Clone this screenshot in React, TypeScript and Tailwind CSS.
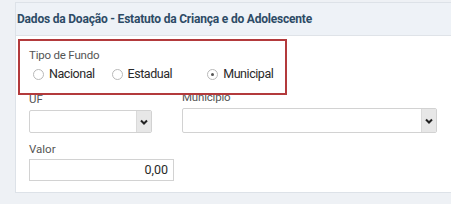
import React from "react";

function Radio({ label, checked, className = "" }: { label: string; checked?: boolean; className?: string }) {
  return (
    <label className={`flex items-center h-[16px] ${className}`}>
      <span className="w-[11px] h-[11px] rounded-full border border-[#b9b9b9] bg-white flex items-center justify-center">
        {checked && <span className="w-[3px] h-[3px] rounded-full bg-[#555]" />}
      </span>
      <span className="ml-[5px] text-[12.5px] tracking-[-0.45px] text-[#2a2a2a]">{label}</span>
    </label>
  );
}

function Select({ width, height }: { width: string; height: string }) {
  return (
    <div className={`${width} ${height} flex border border-[#d2d2d2] rounded-[2px] bg-white overflow-hidden`}>
      <div className="flex-1" />
      <div className="w-[15px] bg-[#e7e7e7] border-l border-[#dadada] flex items-center justify-center">
        <svg width="8" height="6" viewBox="0 0 8 6">
          <path d="M1 1.5 L4 4.5 L7 1.5" fill="none" stroke="#222" strokeWidth="2" />
        </svg>
      </div>
    </div>
  );
}

export default function App() {
  return (
    <div className="w-[451px] h-[204px] bg-[#eef1f5] pt-[2px] pl-[15px] overflow-hidden font-['Roboto',sans-serif]">
      <div className="border-l border-t border-b border-[#dde2e8]">
        <div className="h-[33px] flex items-center pl-[1px] bg-[#eef2f7] border-b border-[#dfe3e8] text-[12px] font-bold text-[#2d4b66] tracking-[-0.2px]">
          Dados da Doação - Estatuto da Criança e do Adolescente
        </div>
        <div className="relative bg-white h-[156px] pl-[13px] pt-[11px]">
          <div className="absolute left-[2px] top-[3px] w-[269px] h-[56px] border-2 border-[#b33a3c]" />
          <div className="text-[11.5px] leading-[16px] text-[#555] tracking-[-0.2px]">Tipo de Fundo</div>
          <div className="flex mt-[3px] pl-[4px]">
            <Radio label="Nacional" />
            <Radio label="Estadual" className="ml-[17px]" />
            <Radio label="Municipal" className="ml-[35px]" checked />
          </div>
          <div className="flex items-start mt-[10px]">
            <div className="w-[123px]">
              <div className="text-[11.5px] leading-[14px] text-[#555]">UF</div>
              <div className="mt-[4px]">
                <Select width="w-[123px]" height="h-[23px]" />
              </div>
            </div>
            <div className="ml-[30px]">
              <div className="-mt-[2px] text-[11.5px] leading-[14px] text-[#555] tracking-[-0.2px]">Município</div>
              <div className="mt-[4px]">
                <Select width="w-[255px]" height="h-[25px]" />
              </div>
            </div>
          </div>
          <div className="mt-[9px] text-[11.5px] leading-[14px] text-[#555]">Valor</div>
          <div className="mt-[3px] w-[145px] h-[22px] border border-[#d2d2d2] flex items-center justify-end pr-[5px] text-[12.5px] text-[#2a2a2a]">
            0,00
          </div>
        </div>
      </div>
    </div>
  );
}
